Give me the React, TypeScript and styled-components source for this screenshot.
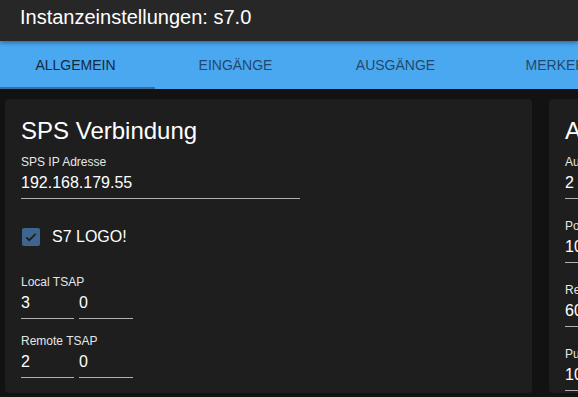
import styled, { createGlobalStyle } from "styled-components";

const GlobalStyle = createGlobalStyle`
  html, body {
    margin: 0;
    padding: 0;
    background: #121212;
    overflow: hidden;
  }
  body {
    font-family: "Liberation Sans", Arial, sans-serif;
  }
`;

const tabs = ["Allgemein", "Eingänge", "Ausgänge", "Merker"];

const generalFields = [
  { label: "Aufrunden auf", value: "2" },
  { label: "Poll Intervall (ms)", value: "1000" },
  { label: "Reconnect Zeit (ms)", value: "60000" },
  { label: "Pulse Zeit (ms)", value: "1000" },
];

export default function App() {
  return (
    <Page>
      <GlobalStyle />
      <Header>
        <Title>Instanzeinstellungen: s7.0</Title>
      </Header>
      <TabBar>
        {tabs.map((t, i) => (
          <Tab key={t} active={i === 0}>
            {t}
          </Tab>
        ))}
      </TabBar>
      <Content>
        <Card>
          <CardTitle>SPS Verbindung</CardTitle>
          <Field width={279} style={{ marginTop: 7 }}>
            <Label>SPS IP Adresse</Label>
            <Value>192.168.179.55</Value>
          </Field>
          <CheckRow>
            <CheckBox>
              <svg width="14" height="14" viewBox="0 0 24 24">
                <path
                  d="M4 12.5l5 5L20 6.5"
                  fill="none"
                  stroke="#1e1e1e"
                  strokeWidth="3"
                />
              </svg>
            </CheckBox>
            <CheckLabel>S7 LOGO!</CheckLabel>
          </CheckRow>
          <Group>
            <Label>Local TSAP</Label>
            <Pair>
              <Field width={53}>
                <Value>3</Value>
              </Field>
              <Field width={54}>
                <Value>0</Value>
              </Field>
            </Pair>
          </Group>
          <Group>
            <Label>Remote TSAP</Label>
            <Pair>
              <Field width={53}>
                <Value>2</Value>
              </Field>
              <Field width={54}>
                <Value>0</Value>
              </Field>
            </Pair>
          </Group>
        </Card>
        <Card>
          <CardTitle>Allgemeine Einstellungen</CardTitle>
          <Stack>
            {generalFields.map((f) => (
              <Field key={f.label} width={279}>
                <Label>{f.label}</Label>
                <Value>{f.value}</Value>
              </Field>
            ))}
          </Stack>
        </Card>
      </Content>
    </Page>
  );
}

const Page = styled.div`
  width: 578px;
  height: 397px;
  overflow: hidden;
  background: #121212;
  display: flex;
  flex-direction: column;
`;

const Header = styled.div`
  height: 41px;
  box-sizing: border-box;
  padding: 5px 20px 0;
  background: #272727;
  position: relative;
  z-index: 2;
  box-shadow: 0 2px 4px rgba(0, 0, 0, 0.35);
`;

const Title = styled.div`
  color: #ffffff;
  font-size: 20px;
  line-height: 24px;
`;

const TabBar = styled.div`
  height: 48px;
  background: #4aa8f0;
  display: flex;
  gap: 5px;
  flex-shrink: 0;
`;

const Tab = styled.div<{ active?: boolean }>`
  width: 155px;
  flex-shrink: 0;
  box-sizing: border-box;
  display: flex;
  align-items: center;
  justify-content: center;
  padding-right: 4px;
  font-size: 14px;
  text-transform: uppercase;
  color: ${(p) => (p.active ? "#14283c" : "#23486c")};
  border-bottom: 2px solid ${(p) => (p.active ? "#3c6f9f" : "transparent")};
  padding-top: 2px;
`;

const Content = styled.div`
  display: flex;
  gap: 17px;
  padding: 10px 0 0 5px;
`;

const Card = styled.div`
  width: 527px;
  height: 294px;
  flex-shrink: 0;
  box-sizing: border-box;
  background: #1e1e1e;
  border-radius: 4px;
  padding: 16px 16px 0;
  display: flex;
  flex-direction: column;
  align-items: flex-start;
`;

const CardTitle = styled.h2`
  margin: 0;
  font-size: 24px;
  line-height: 32px;
  font-weight: normal;
  color: #ffffff;
`;

const Stack = styled.div`
  display: flex;
  flex-direction: column;
  gap: 19px;
  margin-top: 7px;
`;

const Field = styled.div<{ width: number }>`
  width: ${(p) => p.width}px;
  border-bottom: 1px solid #b0b0b0;
  padding-bottom: 6px;
  display: flex;
  flex-direction: column;
`;

const Label = styled.div`
  font-size: 12px;
  line-height: 16px;
  color: #e6e6e6;
  white-space: nowrap;
`;

const Value = styled.div`
  margin-top: 3px;
  font-size: 16px;
  line-height: 19px;
  color: #ffffff;
`;

const CheckRow = styled.div`
  display: flex;
  align-items: center;
  gap: 12px;
  height: 42px;
  margin-top: 17px;
  padding-left: 1px;
`;

const CheckBox = styled.div`
  width: 18px;
  height: 18px;
  border-radius: 2px;
  background: #3d6590;
  display: flex;
  align-items: center;
  justify-content: center;
`;

const CheckLabel = styled.span`
  font-size: 16px;
  color: #ffffff;
`;

const Group = styled.div`
  margin-top: 16px;
  display: flex;
  flex-direction: column;
  & + & {
    margin-top: 14px;
  }
`;

const Pair = styled.div`
  display: flex;
  gap: 5px;
`;
